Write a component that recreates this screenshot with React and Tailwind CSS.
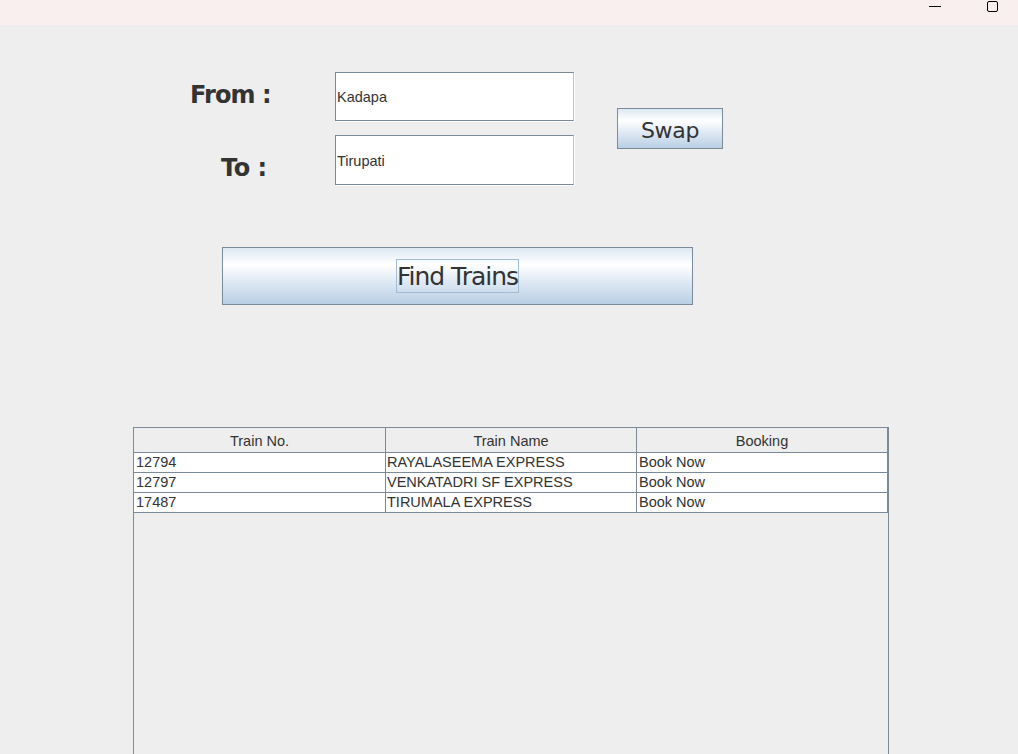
export default function App() {
  const rows = [
    ["12794", "RAYALASEEMA EXPRESS", "Book Now"],
    ["12797", "VENKATADRI SF EXPRESS", "Book Now"],
    ["17487", "TIRUMALA EXPRESS", "Book Now"],
  ];
  const font = { fontFamily: '"Liberation Sans", Arial, sans-serif' };
  const btnBg = "bg-[linear-gradient(to_bottom,#dde8f3_0%,#ffffff_30%,#dfe9f4_60%,#b9cfe5_100%)]";
  return (
    <div className="w-[1018px] h-[754px] bg-[#eeeeee] overflow-hidden flex flex-col" style={font}>
      <div className="h-[25px] bg-[#f9efee] flex justify-end items-start shrink-0">
        <div className="w-[12px] h-[1px] bg-black mt-[6px] mr-[46px]"></div>
        <div className="w-[11px] h-[11px] border border-black rounded-[2px] mt-[1px] mr-[20px]"></div>
      </div>
      <div className="relative flex-1">
        <div className="flex pt-[47px]">
          <div className="w-[190px] shrink-0"></div>
          <div className="w-[145px] shrink-0 flex flex-col">
            <div className="h-[49px] flex items-center pb-[4px] text-[24px] font-bold text-[#333333]" style={{ fontFamily: '"DejaVu Sans", sans-serif', letterSpacing: "-0.9px" }}>From :</div>
            <div className="h-[14px]"></div>
            <div className="h-[50px] flex items-center pl-[31px] pt-[16px] text-[24px] font-bold text-[#333333]" style={{ fontFamily: '"DejaVu Sans", sans-serif', letterSpacing: "-0.5px" }}>To :</div>
          </div>
          <div className="flex flex-col gap-[14px]">
            <div className="w-[239px] h-[49px] bg-white border-t border-l border-b border-[#7a8a99] border-r border-r-[#b8c4d0] flex items-center pl-[1px] pt-[3px] text-[14.5px] text-[#333333] shadow-[1px_1px_0_#ffffff]">Kadapa</div>
            <div className="w-[239px] h-[50px] bg-white border-t border-l border-b border-[#7a8a99] border-r border-r-[#b8c4d0] flex items-center pl-[1px] pt-[3px] text-[14.5px] text-[#333333] shadow-[1px_1px_0_#ffffff]">Tirupati</div>
          </div>
          <div className="pl-[43px] pt-[36px]">
            <div className={`w-[106px] h-[41px] border border-[#7a8a99] ${btnBg} flex items-center justify-center pt-[3px] text-[22px] text-[#333333]`} style={{ fontFamily: '"DejaVu Sans", sans-serif', letterSpacing: "-0.3px" }}>Swap</div>
          </div>
        </div>
        <div className="pl-[222px] pt-[62px]">
          <div className={`w-[471px] h-[58px] border border-[#7a8a99] ${btnBg} flex items-center justify-center`}>
            <div className="border border-[#a3bdd6] h-[34px] w-[123px] flex items-center justify-center pt-[1px] text-[25px] text-[#333333] whitespace-nowrap" style={{ fontFamily: '"DejaVu Sans", sans-serif', letterSpacing: "-1px" }}>Find Trains</div>
          </div>
        </div>
        <div className="pl-[133px] pt-[122px]">
          <div className="w-[756px] h-[400px] border border-[#7a8a99] border-b-0 bg-[#eeeeee]">
            <div className="grid grid-cols-[252px_251px_251px] h-[25px] text-[14.5px] leading-[17px] text-[#333333] border-b border-[#7a8a99]">
              <div className="flex items-center justify-center pt-[3px] border-r border-[#7a8a99]">Train No.</div>
              <div className="flex items-center justify-center pt-[3px] border-r border-[#7a8a99]">Train Name</div>
              <div className="flex items-center justify-center pt-[3px] border-r border-[#7a8a99]">Booking</div>
            </div>
            {rows.map((r, i) => (
              <div key={i} className="grid grid-cols-[252px_251px_251px] h-[20px] bg-white text-[14.5px] leading-[17px] text-[#333333] border-b border-[#7a8a99]">
                <div className="flex items-center pl-[2px] border-r border-[#7a8a99]">{r[0]}</div>
                <div className="flex items-center pl-[1px] border-r border-[#7a8a99]">{r[1]}</div>
                <div className="flex items-center pl-[2px] border-r border-[#7a8a99]">{r[2]}</div>
              </div>
            ))}
          </div>
        </div>
      </div>
    </div>
  );
}
